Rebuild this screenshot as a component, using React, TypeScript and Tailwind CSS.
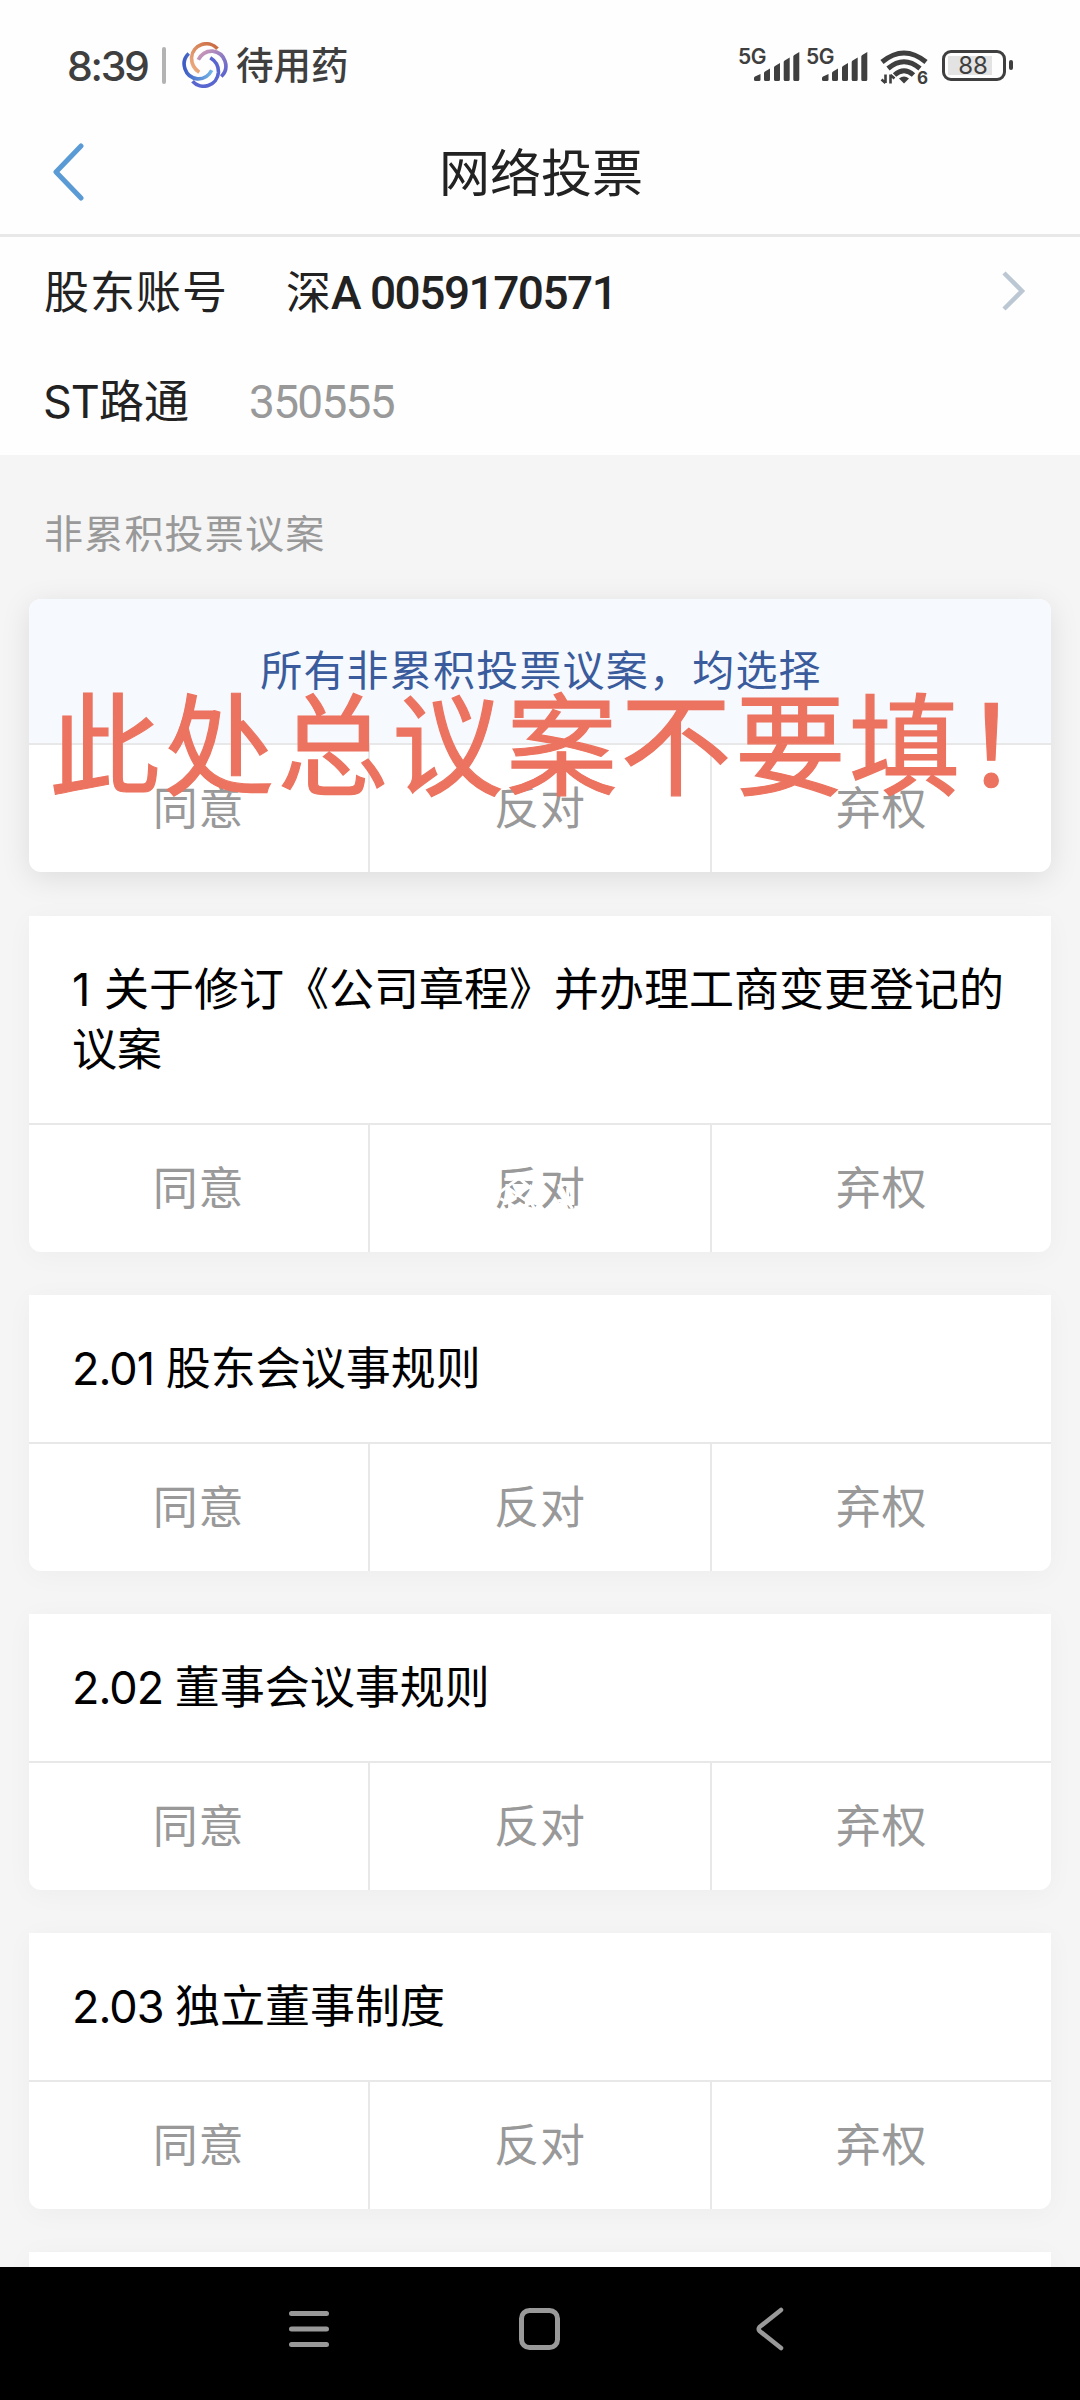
import { clsx } from "clsx";

const options = ["同意", "反对", "弃权"];

const proposals = [
  { no: "1", title: "关于修订《公司章程》并办理工商变更登记的议案", lines: 2, smudged: true },
  { no: "2.01", title: "股东会议事规则", lines: 1 },
  { no: "2.02", title: "董事会议事规则", lines: 1 },
  { no: "2.03", title: "独立董事制度", lines: 1 },
];

function Signal() {
  return (
    <div className="flex h-[40px] w-[62px] items-end text-[#3f3f3f]">
      <span className="-mr-[12px] w-[28px] self-start font-[Inter] text-[21px] leading-[24px] font-semibold tracking-[-0.5px]">5G</span>
      <svg className="h-[36px] w-[46px] shrink-0" viewBox="0 0 46 36" fill="currentColor">
        <path d="M0 29q0-1 1-1.500L6.500 25v5.500q0 1.500-1.500 1.500H1.500q-1.500 0-1.500-1.500Z" />
        <path d="M10 24q0-1 1-1.500l5-3V30.500q0 1.500-1.500 1.500h-3q-1.500 0-1.500-1.500Z" />
        <path d="M20 18.500q0-1 1-1.500l5-3V30.500q0 1.500-1.500 1.500h-3q-1.500 0-1.500-1.500Z" />
        <path d="M29.700 13q0-1 1-1.500l5-3V30.500q0 1.500-1.500 1.500h-3q-1.500 0-1.500-1.500Z" />
        <path d="M39.300 7.500q0-1 1-1.500l5-3V30.500q0 1.500-1.500 1.500h-3q-1.500 0-1.500-1.500Z" />
      </svg>
    </div>
  );
}

function Wifi() {
  return (
    <div className="relative">
      <svg className="h-[40px] w-[48px]" viewBox="0 0 48 40" fill="none" stroke="#3f3f3f" strokeWidth="5">
        <path d="M2 17Q24 -1 46 17" />
        <path d="M8 23.500Q24 10 40 23.500" />
        <path d="M14.500 30Q24 21.500 33.500 30" />
        <path d="M19 33.500Q24 29.500 29 33.500L24 38.500Z" fill="#3f3f3f" stroke="none" />
        <path d="M5.500 29.500v8.500M1.500 34.500l4 3.500M10.500 38.500v-9M10.500 30l4 3.500" strokeWidth="2.600" />
      </svg>
      <span className="absolute top-[23px] left-[37px] font-[Inter] text-[17px] leading-[20px] font-bold text-[#3f3f3f]">6</span>
    </div>
  );
}

function Battery() {
  return (
    <div className="flex items-center">
      <div className="h-[31px] w-[64px] rounded-[9px] border-[3px] border-[#3f3f3f] p-[3px]">
        <div className="flex h-full w-[44px] items-center justify-end bg-[#e3e3e3] pt-0.5 font-[Inter] text-[24px] leading-none">
          <span className="w-[38px] text-center">88</span>
        </div>
      </div>
      <span className="ml-[3px] h-[10px] w-[4px] rounded-sm bg-[#3f3f3f]" />
    </div>
  );
}

function Logo() {
  return (
    <svg className="h-[46px] w-[46px]" viewBox="-1 -1 48 48" fill="none" strokeWidth="3.800">
      <defs>
        <linearGradient id="warm" x1="1" y1="0" x2="0" y2="1">
          <stop offset="0" stopColor="#c9683f" />
          <stop offset="1" stopColor="#eeb083" />
        </linearGradient>
        <linearGradient id="cool" x1="0" y1="0" x2="1" y2="0">
          <stop offset="0" stopColor="#3f5cc4" />
          <stop offset="1" stopColor="#72b4e6" />
        </linearGradient>
        <linearGradient id="violet" x1="0" y1="0" x2="1" y2="1">
          <stop offset="0" stopColor="#d49bb4" />
          <stop offset="1" stopColor="#5560d0" />
        </linearGradient>
      </defs>
      <path d="M36 6A15.500 15.500 0 0 0 9 15Q8.500 25 17 30.500" stroke="url(#warm)" />
      <path d="M6 11A15.500 15.500 0 0 0 15 37.500Q25 38 30 28.500" stroke="url(#cool)" />
      <path d="M10 40A15.500 15.500 0 0 0 37 31Q37.500 21 28.500 15.500" stroke="#5a66d0" />
      <path d="M40 35A15.500 15.500 0 0 0 31 8.500Q21 8 16 17.500" stroke="url(#violet)" />
    </svg>
  );
}

function StatusBar() {
  return (
    <div className="flex h-[130px] items-center justify-between pr-[67px] pl-[67px] text-[#3f3f3f]">
      <div className="flex items-center">
        <span className="w-[95px] pt-[3px] font-[Inter] text-[41px] font-medium tracking-[-2.300px]">8:39</span>
        <span className="h-[37px] w-1 rounded-full bg-[#b3b3b3]" />
        <span className="ml-4">
          <Logo />
        </span>
        <span className="ml-2 pb-[3px] text-[37.500px] font-medium">待用药</span>
      </div>
      <div className="flex items-center">
        <Signal />
        <span className="ml-1.5">
          <Signal />
        </span>
        <span className="ml-3">
          <Wifi />
        </span>
        <span className="ml-3.5">
          <Battery />
        </span>
      </div>
    </div>
  );
}

/* white scribble that eats into the label */
function Smudge() {
  return (
    <svg className="absolute top-[14px] left-[-5px] h-[50px] w-[100px]" viewBox="0 0 300 150" fill="none" stroke="#fff" strokeWidth="9">
      <path d="M28 82 90 36l48 42M46 40h22M110 40h26M52 62l70 50M128 58 62 104M34 98l52 28 56-20M62 108v24M112 104v26M128 112l10 20" />
      <path d="M206 60l34-8M236 66v34M206 104q30-4 44 24M232 112l-8 18M256 124h22" />
    </svg>
  );
}

function OptionRow({ smudged = false }: { smudged?: boolean }) {
  return (
    <div className="grid h-[129px] grid-cols-[341px_342px_1fr] border-t-2 border-[#e8e8e8] text-[45px] tracking-[0.800px] text-[#999]">
      {options.map((option, i) => (
        <div key={option} className={clsx("flex items-center justify-center pb-[5px]", i < 2 && "border-r-2 border-[#e8e8e8]")}>
          <span className="relative">
            {option}
            {smudged && i === 1 && <Smudge />}
          </span>
        </div>
      ))}
    </div>
  );
}

export default function App() {
  return (
    <div className="flex h-[2400px] w-[1080px] flex-col overflow-hidden bg-[#f5f5f5] font-['Noto_Sans_CJK_SC',sans-serif]">
      <div className="bg-[#fefefe]">
        <StatusBar />
        <header className="flex h-[107px] items-center border-b-[3px] border-[#e8e8e8] px-[50px] pb-[20px]">
          <svg className="h-[58px] w-[38px]" viewBox="0 0 38 58" fill="none" stroke="#5b9bd5" strokeWidth="5" strokeLinecap="round" strokeLinejoin="round">
            <path d="M31 3 6 29l25 26" />
          </svg>
          <h1 className="flex-1 pr-[36px] pb-[3px] text-center text-[51px] text-[#222]">网络投票</h1>
        </header>
        <div className="flex h-[109px] items-center px-[44px] text-[45px] text-[#222]">
          <span className="w-[242px] pb-[4px] tracking-[1px]">股东账号</span>
          <span className="pb-[4px]">深</span>
          <span className="flex-1 pt-[3px] font-[Roboto] text-[46px] font-medium tracking-[-1.500px]">A 0059170571</span>
          <svg className="mr-[10px] mb-[2px] h-[40px] w-[24px]" viewBox="0 0 24 40" fill="none" stroke="#bcc7d4" strokeWidth="4.500">
            <path d="M2 2l18 18L2 38" />
          </svg>
        </div>
        <div className="flex h-[109px] items-center px-[43px] text-[45px] text-[#222]">
          <span className="w-[206px] pb-[3px]">
            <span className="font-[Inter] leading-none tracking-[-1px]">ST</span>路通
          </span>
          <span className="pt-[4px] font-[Roboto] text-[46px] tracking-[-1.700px] text-[#999]">350555</span>
        </div>
      </div>

      <div className="flex-1 overflow-hidden px-[29px]">
        <h2 className="flex h-[144px] items-center pt-[9px] pl-[15px] text-[39px] tracking-[1.200px] text-[#999]">非累积投票议案</h2>

        <div className="flex flex-col gap-[43.500px]">
          <section className="relative rounded-xl bg-white shadow-[0_6px_30px_rgba(0,0,0,0.1)]">
            <div className="flex h-[144px] items-center justify-center rounded-t-xl bg-[#f6f9fe] pb-[7px] pl-[2px] text-[42px] tracking-[1.200px] text-[#3a5c9c]">
              所有非累积投票议案，均选择
            </div>
            <OptionRow />
            {/* warning written across the whole card */}
            <p className="absolute top-[60px] left-[20px] text-[111px] leading-[160px] tracking-[3.300px] whitespace-nowrap text-[#ec735f] [-webkit-text-stroke:1.200px_#ec735f]">
              此处总议案不要填！
            </p>
          </section>

          {proposals.map((item) => (
            <section key={item.no} className="rounded-b-xl bg-white shadow-[0_4px_28px_rgba(0,0,0,0.035)]">
              <h3 className={clsx("pt-[41px] pr-[40px] pl-[43px] text-[45px] leading-[60px] text-black", item.lines === 2 ? "h-[207px]" : "h-[146.500px]")}>
                <span className={clsx("font-[Inter] leading-none", item.lines === 2 ? "tracking-[0.500px]" : "tracking-[-1px]")}>{item.no} </span>
                {item.title}
              </h3>
              <OptionRow smudged={item.smudged} />
            </section>
          ))}
          <section className="h-[276px] shrink-0 bg-white shadow-[0_4px_28px_rgba(0,0,0,0.035)]" />
        </div>
      </div>

      <nav className="flex h-[133px] shrink-0 items-center bg-black pb-[9px]">
        <svg className="ml-[287px] h-[46px] w-[44px]" viewBox="0 0 44 46" stroke="#999" strokeWidth="5" strokeLinecap="round">
          <path d="M4.500 7.500h35M4.500 23h35M4.500 38.500h35" />
        </svg>
        <svg className="ml-[186px] h-[46px] w-[46px]" viewBox="0 0 46 46" fill="none" stroke="#999" strokeWidth="5">
          <rect x="4.500" y="4.500" width="36" height="37" rx="8" />
        </svg>
        <svg className="ml-[190px] h-[46px] w-[34px]" viewBox="0 0 34 46" fill="none" stroke="#999" strokeWidth="4.500" strokeLinecap="round">
          <path d="M28 4 6.500 21q-1.500 2 0 4L28 42" />
        </svg>
      </nav>
    </div>
  );
}
